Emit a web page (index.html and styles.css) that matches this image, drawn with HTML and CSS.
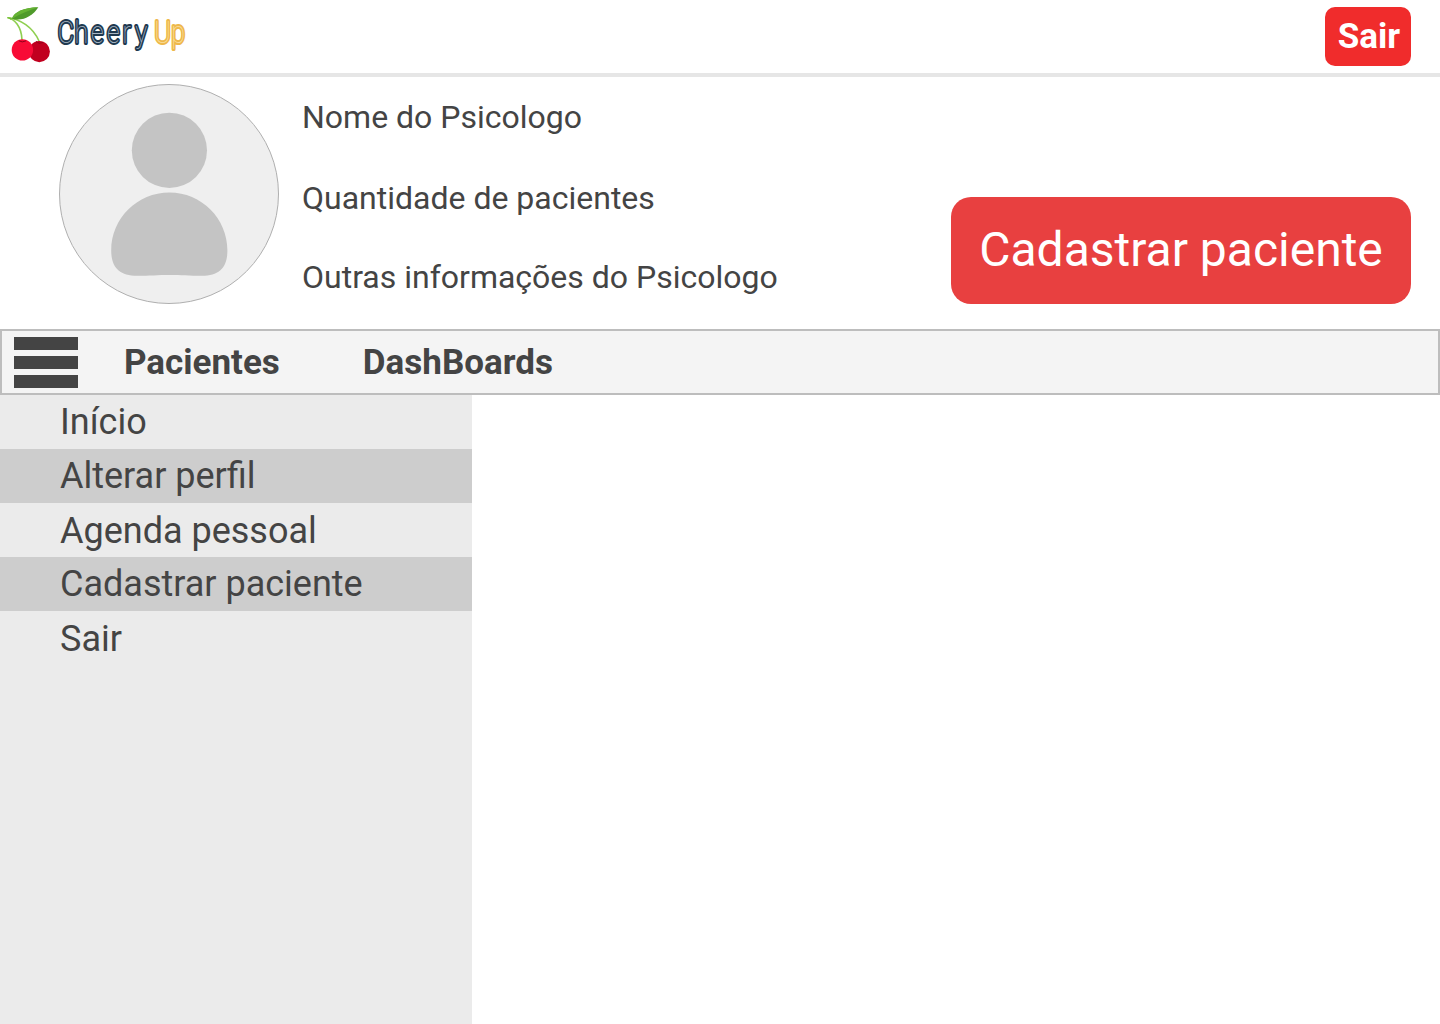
FILE: index.html
```html
<!DOCTYPE html>
<html lang="pt-BR">
<head>
<meta charset="utf-8">
<title>CheeryUp</title>
<link rel="stylesheet" href="styles.css">
</head>
<body>
<header class="topbar">
  <svg class="logo" width="200" height="73" viewBox="0 0 200 73" role="img" aria-label="CheeryUp">
    <g fill="none" stroke="#8fcf50" stroke-width="1.6" stroke-linecap="round">
      <path d="M8 17.7C14 19 21.5 26 22 40"/>
      <path d="M8 17.7C20 19 33 27 39 41"/>
    </g>
    <path d="M7.3 17.2L12 18L11 20Z" fill="#72bb35"/>
    <path d="M12 18.7C14 12 24 7.5 38.3 7.3C33 16 22 22 12 18.7Z" fill="#4f9a2b"/>
    <path d="M12 18.7C14 12 24 7.5 38.3 7.3C30 10 20 14 12 18.7Z" fill="#65b333"/>
    <circle cx="39.3" cy="51.6" r="10.6" fill="#c1001f"/>
    <circle cx="22.4" cy="49.9" r="10.7" fill="#f80b36"/>
    <path d="M36 41.5Q39 44.5 43 42.5M19 40.8Q22 43 26 40.8" fill="none" stroke="#91001c" stroke-width="1"/>
    <g class="wordmark" transform="scale(.82 1)">
      <text class="wordmark-dark" x="70.4 91 111 130.5 149.5 165" y="43.2">Cheery</text>
      <text class="wordmark-gold" x="188.2 209" y="43.2">Up</text>
    </g>
  </svg>
  <button class="logout">Sair</button>
</header>
<section class="profile">
  <svg class="avatar" width="220" height="220" viewBox="0 0 220 220">
    <circle cx="110" cy="110" r="109.5" fill="#efefef" stroke="#afafaf"/>
    <circle cx="110.4" cy="66.3" r="37.6" fill="#c4c4c4"/>
    <path d="M110.4 108.5C142.5 108.5 168.4 134.5 168.4 166.5C168.4 184 160 191.8 143 191.8C130 191.8 122 191 110.4 191C99 191 91 191.8 78 191.8C61 191.8 52.2 184 52.2 166.5C52.2 134.5 78.3 108.5 110.4 108.5Z" fill="#c4c4c4"/>
  </svg>
  <div class="details">
    <p>Nome do Psicologo</p>
    <p>Quantidade de pacientes</p>
    <p>Outras informações do Psicologo</p>
  </div>
  <button class="register">Cadastrar paciente</button>
</section>
<nav class="tabs">
  <div class="burger"><span></span><span></span><span></span></div>
  <a class="tab">Pacientes</a>
  <a class="tab">DashBoards</a>
</nav>
<aside class="sidebar">
  <a class="item">Início</a>
  <a class="item">Alterar perfil</a>
  <a class="item">Agenda pessoal</a>
  <a class="item">Cadastrar paciente</a>
  <a class="item">Sair</a>
</aside>
</body>
</html>
```
FILE: styles.css
```css
* { box-sizing: border-box; }
body {
  margin: 0;
  height: 1024px;
  display: flex;
  flex-direction: column;
  overflow: hidden;
  background: #fff;
  color: #444;
  font-family: Roboto, sans-serif;
}
button { border: 0; padding: 0; color: #fff; font-family: inherit; }
.topbar {
  flex: none;
  display: flex;
  justify-content: space-between;
  height: 77px;
  padding-right: 29px;
  border-bottom: 4px solid #e6e6e6;
}
.wordmark {
  font-size: 30.5px;
  font-weight: 100;
  stroke-width: 4px;
  stroke-linejoin: round;
  paint-order: stroke;
}
.wordmark-dark { fill: #aab7c4; stroke: #20394f; }
.wordmark-gold { fill: #fbe0a0; stroke: #eeb84b; }
.logout {
  width: 86px;
  height: 59px;
  margin-top: 7px;
  padding: 1px 0 0 2px;
  border-radius: 10px;
  background: #f02c2c;
  font-size: 35px;
  font-weight: 700;
  line-height: 58px;
}
.profile {
  flex: none;
  display: flex;
  height: 252px;
  padding: 7px 29px 0 59px;
}
.avatar { flex: none; }
.details { flex: 1; padding: 13px 0 0 23px; }
.details p { margin: 0; height: 80px; font-size: 32px; line-height: 40px; }
.details p:nth-child(2) { padding-top: 1px; }
.register {
  width: 460px;
  height: 107px;
  margin-top: 113px;
  padding-bottom: 2px;
  border-radius: 20px;
  background: #e84040;
  font-size: 48px;
  line-height: 105px;
}
.tabs {
  flex: none;
  display: flex;
  height: 66px;
  padding-left: 12px;
  border: 2px solid #bdbdbd;
  background: #f4f4f4;
}
.burger {
  display: flex;
  flex-direction: column;
  gap: 6px;
  width: 64px;
  margin: 6px 46px 0 0;
}
.burger span { height: 13px; background: #444; }
.tab { margin-right: 83px; padding-top: 1px; font-size: 35px; font-weight: 700; line-height: 62px; }
.sidebar { flex: 1; width: 472px; background: #ebebeb; }
.item { display: block; height: 54px; padding-left: 60px; font-size: 36px; line-height: 54px; }
.item:nth-child(even) { background: #cdcdcd; }
.item:nth-child(3), .item:nth-child(5) { padding-top: 1px; }
```
